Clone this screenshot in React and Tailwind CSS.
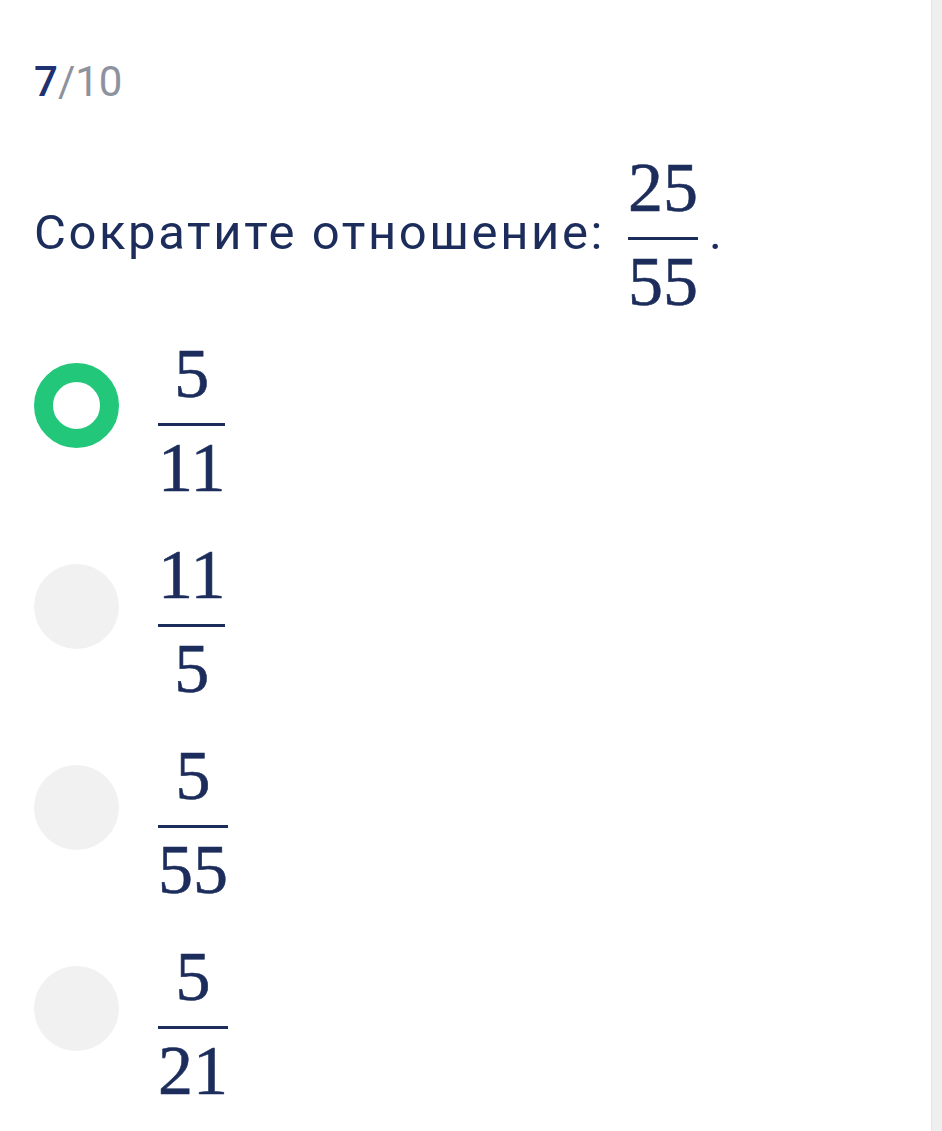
import React from 'react'

const navy = 'text-[#1c2d5c]'

const Frac = ({ num, den }) => {
  return (
    <div className={`inline-flex flex-col items-center px-[3px] font-['Liberation_Serif',serif] ${navy} [-webkit-text-stroke:0.6px_#1c2d5c]`}>
      <div className="text-[70px] leading-none h-[70px]">{num}</div>
      <div className="mt-[14px] h-[3px] w-full bg-[#1c2d5c]" />
      <div className="mt-[7px] text-[70px] leading-none h-[70px]">{den}</div>
    </div>
  )
}

const Option = ({ num, den, selected }) => {
  return (
    <div className="flex items-start">
      {selected ? (
        <div className="mt-[24px] w-[85px] h-[85px] rounded-full border-[19px] border-[#22c77a] bg-white shrink-0" />
      ) : (
        <div className="mt-[24px] w-[85px] h-[85px] rounded-full bg-[#f1f1f1] shrink-0" />
      )}
      <div className="ml-[36px]">
        <Frac num={num} den={den} />
      </div>
    </div>
  )
}

export default function App() {
  const options = [
    { num: '5', den: '11', selected: true },
    { num: '11', den: '5' },
    { num: '5', den: '55' },
    { num: '5', den: '21' },
  ]

  return (
    <div className="flex min-h-screen bg-white font-['Roboto','Liberation_Sans',sans-serif]">
      <main className="flex-1 pl-[34px] pt-[61px]">
        <div className="text-[42px] leading-none h-[44px]">
          <span className="text-[#1f3170] font-medium">7</span>
          <span className="text-[#8d929e]">/10</span>
        </div>

        <div className="mt-[48px] flex items-start">
          <div className={`mt-[55px] text-[49px] leading-none tracking-[2.6px] ${navy}`}>Сократите отношение:</div>
          <div className="ml-[20px]">
            <Frac num="25" den="55" />
          </div>
          <div className={`mt-[55px] ml-[8px] text-[49px] leading-none ${navy}`}>.</div>
        </div>

        <div className="mt-[22px] flex flex-col gap-[37px]">
          {options.map((o, i) => (
            <Option key={i} num={o.num} den={o.den} selected={o.selected} />
          ))}
        </div>
      </main>
      <div className="w-[11px] bg-[#efefef] border-l border-[#e4e4e4]" />
    </div>
  )
}
